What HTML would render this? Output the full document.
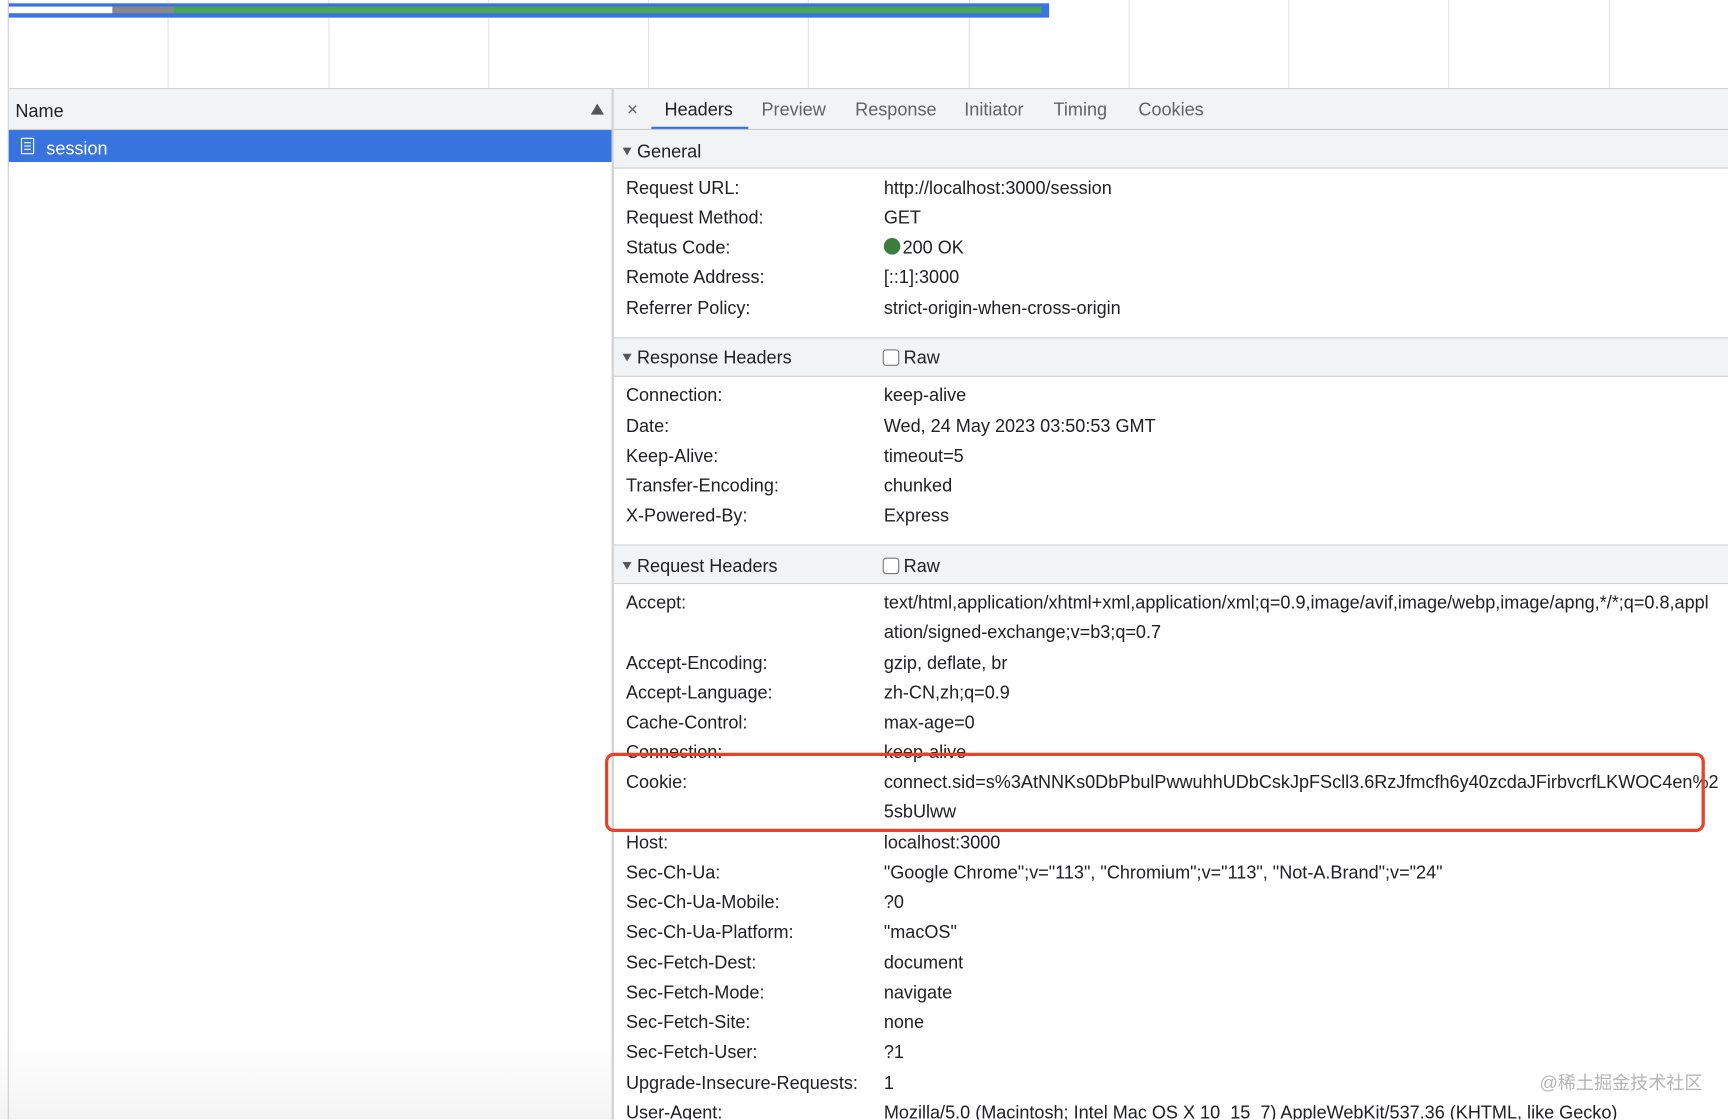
<!DOCTYPE html>
<html><head><meta charset="utf-8"><style>
html,body{margin:0;padding:0;width:1728px;height:1120px;overflow:hidden;background:#fff}
#w{position:absolute;left:0;top:0;width:1568px;height:1016px;transform:scale(1.10204);transform-origin:0 0;font-family:"Liberation Sans",Arial,sans-serif;font-size:16.4px;color:#202124;overflow:hidden}
.a{position:absolute}
.vl{position:absolute;top:0;height:80px;width:1px;background:#e3e3e3}
.r{position:absolute;height:22px;line-height:22px;white-space:nowrap;margin-top:2px}
.sec{position:absolute;left:557px;right:0;background:#f1f3f4;border-top:1px solid #d0d0d0;border-bottom:1px solid #d0d0d0}
.tri{display:inline-block;width:0;height:0;border-left:4px solid transparent;border-right:4px solid transparent;border-top:7px solid #555;margin-right:5px;vertical-align:2px}
.cb{display:inline-block;width:13px;height:13px;border:1px solid #777;border-radius:3px;vertical-align:-2px;margin-right:4px;background:#fff}
.tab{position:absolute;top:82px;height:36px;line-height:36px;color:#5f6368}
</style></head><body><div id="w">
<div class="a" style="left:0;top:940px;width:556px;height:76px;background:linear-gradient(#fff,#f4f4f4)"></div>
<div class="a" style="left:7px;top:0;width:1px;height:1016px;background:#ccc"></div>
<div class="vl" style="left:152px"></div><div class="vl" style="left:298px"></div><div class="vl" style="left:443px"></div><div class="vl" style="left:588px"></div><div class="vl" style="left:733px"></div><div class="vl" style="left:879px"></div><div class="vl" style="left:1024px"></div><div class="vl" style="left:1169px"></div><div class="vl" style="left:1314px"></div><div class="vl" style="left:1460px"></div>
<div class="a" style="left:8px;top:3px;width:944px;height:13px;background:#3a74de"></div>
<div class="a" style="left:8px;top:6px;width:94px;height:6px;background:#fff"></div>
<div class="a" style="left:102px;top:6px;width:56px;height:6px;background:#888"></div>
<div class="a" style="left:158px;top:6px;width:787px;height:6px;background:#4aa553"></div>
<div class="a" style="left:8px;top:80px;width:1560px;height:1px;background:#ccc"></div>
<div class="a" style="left:8px;top:81px;width:547px;height:36px;background:#f1f3f4;border-bottom:1px solid #d0d0d0"></div>
<div class="r" style="left:14px;top:88px">Name</div>
<div class="a" style="left:536px;top:94px;width:0;height:0;border-left:6px solid transparent;border-right:6px solid transparent;border-bottom:10px solid #555"></div>
<div class="a" style="left:8px;top:118px;width:547px;height:29px;background:#3874de"></div>
<div class="a" style="left:19px;top:125px;width:10px;height:13px;border:1.5px solid #fff;border-radius:1px"></div>
<div class="a" style="left:22px;top:129px;width:6px;height:1px;background:#fff;box-shadow:0 3px 0 #fff,0 6px 0 #fff"></div>
<div class="r" style="left:42px;top:122px;color:#fff">session</div>
<div class="a" style="left:555px;top:81px;width:2px;height:935px;background:#d0d0d0"></div>
<div class="a" style="left:557px;top:81px;right:0;height:36px;background:#f1f3f4;border-bottom:1px solid #cbcbcb"></div>
<div class="tab" style="left:569px;font-size:17px">×</div>
<div class="tab" style="left:603px;color:#202124">Headers</div>
<div class="a" style="left:591px;top:115px;width:88px;height:2px;background:#3874de"></div>
<div class="tab" style="left:691px">Preview</div>
<div class="tab" style="left:776px">Response</div>
<div class="tab" style="left:875px">Initiator</div>
<div class="tab" style="left:956px">Timing</div>
<div class="tab" style="left:1033px">Cookies</div>
<div class="sec" style="top:118px;height:34px;border-top:none"></div>
<div class="r" style="left:565px;top:125px"><span class="tri"></span>General</div>
<div class="sec" style="top:306px;height:34px"></div>
<div class="r" style="left:565px;top:312px"><span class="tri"></span>Response Headers</div>
<div class="r" style="left:801px;top:312px"><span class="cb"></span>Raw</div>
<div class="sec" style="top:494px;height:34px"></div>
<div class="r" style="left:565px;top:501px"><span class="tri"></span>Request Headers</div>
<div class="r" style="left:801px;top:501px"><span class="cb"></span>Raw</div>

<div class="r" style="left:568px;top:158px">Request URL:</div><div class="r" style="left:802px;top:158px">http://localhost:3000/session</div>
<div class="r" style="left:568px;top:185px">Request Method:</div><div class="r" style="left:802px;top:185px">GET</div>
<div class="r" style="left:568px;top:212px">Status Code:</div><div class="r" style="left:802px;top:212px"><span style="display:inline-block;width:15px;height:15px;border-radius:50%;background:#3a7d3e;vertical-align:-1px;margin-right:2px"></span>200 OK</div>
<div class="r" style="left:568px;top:239px">Remote Address:</div><div class="r" style="left:802px;top:239px">[::1]:3000</div>
<div class="r" style="left:568px;top:267px">Referrer Policy:</div><div class="r" style="left:802px;top:267px">strict-origin-when-cross-origin</div>

<div class="r" style="left:568px;top:346px">Connection:</div><div class="r" style="left:802px;top:346px">keep-alive</div>
<div class="r" style="left:568px;top:374px">Date:</div><div class="r" style="left:802px;top:374px">Wed, 24 May 2023 03:50:53 GMT</div>
<div class="r" style="left:568px;top:401px">Keep-Alive:</div><div class="r" style="left:802px;top:401px">timeout=5</div>
<div class="r" style="left:568px;top:428px">Transfer-Encoding:</div><div class="r" style="left:802px;top:428px">chunked</div>
<div class="r" style="left:568px;top:455px">X-Powered-By:</div><div class="r" style="left:802px;top:455px">Express</div>

<div class="r" style="left:568px;top:534px">Accept:</div><div class="r" style="left:802px;top:534px">text/html,application/xhtml+xml,application/xml;q=0.9,image/avif,image/webp,image/apng,*/*;q=0.8,appl</div>
<div class="r" style="left:802px;top:561px">ation/signed-exchange;v=b3;q=0.7</div>
<div class="r" style="left:568px;top:589px">Accept-Encoding:</div><div class="r" style="left:802px;top:589px">gzip, deflate, br</div>
<div class="r" style="left:568px;top:616px">Accept-Language:</div><div class="r" style="left:802px;top:616px">zh-CN,zh;q=0.9</div>
<div class="r" style="left:568px;top:643px">Cache-Control:</div><div class="r" style="left:802px;top:643px">max-age=0</div>
<div class="r" style="left:568px;top:670px">Connection:</div><div class="r" style="left:802px;top:670px">keep-alive</div>
<div class="r" style="left:568px;top:697px">Cookie:</div><div class="r" style="left:802px;top:697px">connect.sid=s%3AtNNKs0DbPbulPwwuhhUDbCskJpFScll3.6RzJfmcfh6y40zcdaJFirbvcrfLKWOC4en%2</div>
<div class="r" style="left:802px;top:724px">5sbUlww</div>
<div class="r" style="left:568px;top:752px">Host:</div><div class="r" style="left:802px;top:752px">localhost:3000</div>
<div class="r" style="left:568px;top:779px">Sec-Ch-Ua:</div><div class="r" style="left:802px;top:779px">"Google Chrome";v="113", "Chromium";v="113", "Not-A.Brand";v="24"</div>
<div class="r" style="left:568px;top:806px">Sec-Ch-Ua-Mobile:</div><div class="r" style="left:802px;top:806px">?0</div>
<div class="r" style="left:568px;top:833px">Sec-Ch-Ua-Platform:</div><div class="r" style="left:802px;top:833px">"macOS"</div>
<div class="r" style="left:568px;top:861px">Sec-Fetch-Dest:</div><div class="r" style="left:802px;top:861px">document</div>
<div class="r" style="left:568px;top:888px">Sec-Fetch-Mode:</div><div class="r" style="left:802px;top:888px">navigate</div>
<div class="r" style="left:568px;top:915px">Sec-Fetch-Site:</div><div class="r" style="left:802px;top:915px">none</div>
<div class="r" style="left:568px;top:942px">Sec-Fetch-User:</div><div class="r" style="left:802px;top:942px">?1</div>
<div class="r" style="left:568px;top:970px">Upgrade-Insecure-Requests:</div><div class="r" style="left:802px;top:970px">1</div>
<div class="r" style="left:568px;top:997px">User-Agent:</div><div class="r" style="left:802px;top:997px">Mozilla/5.0 (Macintosh; Intel Mac OS X 10_15_7) AppleWebKit/537.36 (KHTML, like Gecko)</div>

<div class="a" style="left:549px;top:683px;width:992px;height:66px;border:3px solid #e8412c;border-radius:8px"></div>
<div class="r" style="left:1397px;top:970px;color:#b5b5b5;font-family:'Liberation Sans','Noto Sans CJK SC',sans-serif">@稀土掘金技术社区</div>
</div></body></html>
